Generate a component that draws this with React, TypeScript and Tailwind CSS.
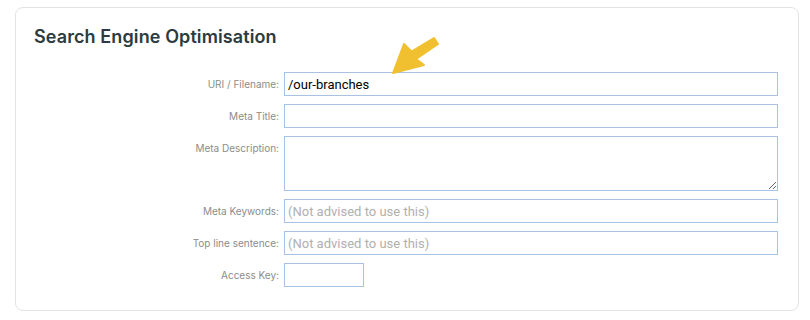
import React from "react";

const labelCls =
  "text-right text-[10px] leading-[24px] text-[#8c8c8c] pr-[5px] whitespace-nowrap";
const inputCls =
  "block w-full h-[24px] border border-[#a9c1e2] bg-white px-[3px] text-[13px] text-black outline-none placeholder:text-[#b0b0b0] font-['Roboto',sans-serif]";

const Row: React.FC<{ label: string; children: React.ReactNode }> = ({
  label,
  children,
}) => (
  <>
    <div className={labelCls}>{label}</div>
    <div>{children}</div>
  </>
);

const App: React.FC = () => {
  return (
    <div className="w-[810px] h-[320px] bg-white pt-[7px] pl-[15px] font-['Inter',sans-serif]">
      <div className="relative w-[784px] h-[304px] rounded-lg border border-[#e3e3e3] bg-white pl-[18px] pr-[20px] pt-[16px]">
        <h2 className="text-[18px] leading-[26px] font-semibold text-[#2b3b40] tracking-[0.1px]">
          Search Engine Optimisation
        </h2>
        <div className="grid grid-cols-[250px_1fr] gap-y-[8px] mt-[22px]">
          <Row label="URI / Filename:">
            <input className={inputCls} defaultValue="/our-branches" />
          </Row>
          <Row label="Meta Title:">
            <input className={inputCls} />
          </Row>
          <Row label="Meta Description:">
            <textarea className="block w-full h-[55px] border border-[#a9c1e2] bg-white px-[3px] text-[13px] outline-none" />
          </Row>
          <Row label="Meta Keywords:">
            <input
              className={inputCls}
              placeholder="(Not advised to use this)"
            />
          </Row>
          <Row label="Top line sentence:">
            <input
              className={inputCls}
              placeholder="(Not advised to use this)"
            />
          </Row>
          <Row label="Access Key:">
            <input className={`${inputCls} !w-[80px]`} />
          </Row>
        </div>
        <svg
          className="absolute left-[354px] top-[21px]"
          width="72"
          height="50"
          viewBox="0 0 72 50"
        >
          <polygon
            points="23,44 34,15 41.5,22.5 64,9 68,15 46,30 54,36"
            fill="#f0c030"
            stroke="#f0c030"
            strokeWidth="2"
            strokeLinejoin="round"
          />
        </svg>
      </div>
    </div>
  );
};

export default App;
